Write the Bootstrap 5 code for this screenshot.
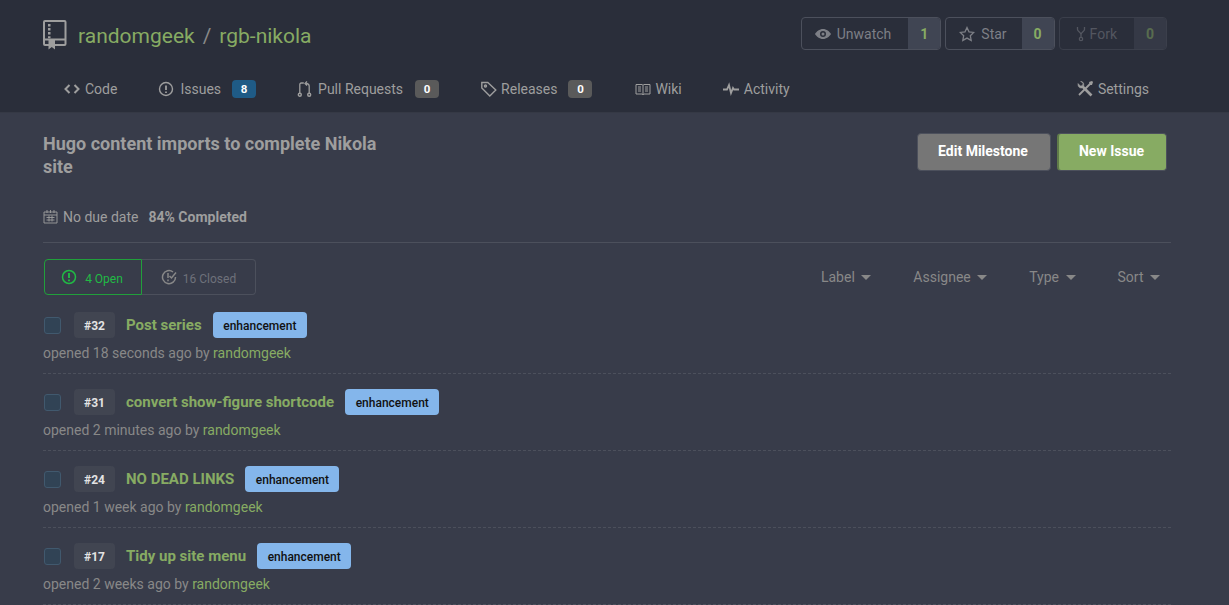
<!DOCTYPE html>
<html lang="en"><head><meta charset="utf-8"><title>Milestone</title>
<link href="https://cdn.jsdelivr.net/npm/bootstrap@5.3.0/dist/css/bootstrap.min.css" rel="stylesheet">
<style>
html,body{height:605px;overflow:hidden}
body{background:#383c4a;color:#9e9e9e;font:14px/20px Roboto,sans-serif}
a{color:inherit;text-decoration:none}
.hdr{background:#2a2e3a;height:113px;padding:0 62px 0 43px;border-bottom:1px solid #353945}
.repo-row{height:70px;padding-top:17px}
.repo-title{font-size:21px;line-height:36px;color:#87ab63;font-weight:400;padding-top:1px}
.repo-title .sep{color:#888;margin:0 8px}
.repo-ico{width:24px;height:30px;margin:3px 11px 0 0}
.act{display:flex;height:33px;border:1px solid #4c505c;border-radius:4px;overflow:hidden;color:#7d7f86}
.act>span:first-child{display:flex;align-items:center;gap:6px;padding:0 17px 0 13px}
.act>span:last-child{background:#404553;color:#87ab63;font-weight:700;width:32px;display:flex;align-items:center;justify-content:center}
.act svg{width:16px;height:16px;fill:#7d7f86}
.act.star>span:first-child{padding-right:15px}
.act.off{opacity:.5}
.act.off>span:first-child{gap:1px;padding-right:17px}
.tabs{height:43px;padding-left:21px}
.tab{display:flex;align-items:center;gap:5px;height:38px;color:#9e9e9e}
.tab svg{width:16px;height:16px;fill:none;stroke:#9e9e9e;stroke-width:1.4}
.tab-code,.tab-issues{margin-right:41px}
.tab-issues{gap:6px}
.tab-pulls{margin-right:42px}
.tab-rel{margin-right:43px;gap:4px}
.tab-wiki{margin-right:41px;gap:4px}
.tab-act{gap:5px}
.tab-set{margin-right:18px}
.tab .cnt{font-size:11.5px;font-weight:700;color:#fff;background:#5a5a5a;border-radius:4px;width:24px;height:18px;display:flex;align-items:center;justify-content:center;margin-left:7px}
.tab .cnt.blue{background:#1f5b86;margin-left:5px}
.wrap{padding:0 58px 0 43px}
.ms-title{font-size:18px;line-height:23px;font-weight:700;width:340px;color:#9e9e9e;padding-top:19px}
.ms-btns{margin-top:20px;margin-right:4px}
.bt{height:38px;border:1px solid #4c505c;border-radius:4px;color:#fff;font-weight:700;display:flex;align-items:center;justify-content:center;padding:0 2px 2px 0}
.bt.grey{width:134px;background:#767676}
.bt.green{width:110px;background:#87ab63;margin-left:6px;border-left:2px solid #5f7a49}
.meta{margin-top:29px;border-bottom:1px solid #4c505c;height:36px}
.meta b{font-weight:700;margin-left:10px}
.cal{width:15px;height:15px;margin-right:5px;fill:none;stroke:#9e9e9e;stroke-width:.9;vertical-align:-2px}
.filter{margin-top:16px;height:38px}
.seg{display:flex;font-size:12px;margin-left:1px}
.seg>div{height:36px;display:flex;align-items:center}
.seg .open{width:98px;border:1px solid #21a03b;border-radius:4px 0 0 4px;color:#21ba45;justify-content:center;gap:8px;padding-right:2px}
.seg .closed{width:114px;border:1px solid #4c505c;border-left:0;border-radius:0 4px 4px 0;color:#6e717a;justify-content:center;gap:6px}
.seg span{padding-top:3px}
.seg svg{width:16px;height:16px;fill:none;stroke:currentColor;stroke-width:1.5}
.seg .closed svg{stroke:#888}
.menu-it{display:flex;align-items:center;gap:6.5px;color:#888;height:36px}
.menu-it i{width:0;height:0;border:5px solid transparent;border-top-color:#888;border-bottom:0}
.menus{gap:42px;padding-right:11px;font-size:14px}
.it{height:77px;border-bottom:1px dashed #4c505c;padding-top:15px}
.cb{width:17px;height:17px;background:#314355;border:1px solid #41596e;border-radius:3px;margin:0 13px 0 1px}
.num{width:41px;height:26px;background:#414551;border-radius:4px;color:#e3e3e3;font-size:12px;font-weight:700;display:flex;align-items:center;justify-content:center;margin-right:11px;padding-top:1px}
.ttl{font-weight:700;font-size:15px;color:#87ab63;margin-right:11.2px}
.lbl{background:#84b6eb;color:#111;font-size:12px;font-weight:500;height:26px;padding:1px 10.4px 0;border-radius:4px;display:flex;align-items:center}
.sub{margin-top:5px;color:#888}
.sub a{color:#87ab63}
</style></head><body>
<header class="hdr">
<div class="repo-row d-flex justify-content-between align-items-start">
<div class="d-flex align-items-start">
<svg class="repo-ico" viewBox="0 0 24 30"><g fill="none" stroke="#9e9e9e" stroke-width="2"><rect x="1" y="1" width="21.500" height="24" rx="1"/><path d="M1 19.500h21.500"/></g><path fill="#9e9e9e" d="M5 4h2.500v2.500H5zM5 8h2.500v2.500H5zM5 12h2.500v2.500H5zM5 16.200h2.500v2H5zM5.500 20h6.500v9.500l-3.250-2.500-3.250 2.500z"/></svg>
<div class="repo-title"><a href="#">randomgeek</a><span class="sep">/</span><a href="#">rgb-nikola</a></div>
</div>
<div class="d-flex gap-1">
<div class="act"><span><svg viewBox="0 0 16 16"><path fill-rule="evenodd" d="M8 3C4.500 3 1.500 5.500 0 8c1.500 2.500 4.500 5 8 5s6.500-2.500 8-5c-1.500-2.500-4.500-5-8-5zm0 8a3 3 0 1 1 0-6 3 3 0 0 1 0 6zm0-1.500a1.500 1.500 0 1 0 0-3 1.500 1.500 0 0 0 0 3z"/></svg>Unwatch</span><span>1</span></div>
<div class="act star"><span><svg viewBox="0 0 16 16"><path fill="none" stroke="#7d7f86" stroke-width="1.300" d="M8 1.500l2 4.300 4.700.6-3.400 3.300.9 4.700L8 12.100l-4.200 2.300.9-4.700L1.300 6.400 6 5.800z"/></svg>Star</span><span>0</span></div>
<div class="act off"><span><svg viewBox="0 0 16 16"><path fill="none" stroke="#7d7f86" stroke-width="1.300" d="M4.500 1v2.500c0 2 3.500 2.500 3.500 5 0-2.500 3.500-3 3.500-5V1M8 8.500V11"/><circle cx="8" cy="13" r="1.700" fill="none" stroke="#7d7f86" stroke-width="1.200"/></svg>Fork</span><span>0</span></div>
</div>
</div>
<nav class="tabs d-flex justify-content-between">
<div class="d-flex">
<a class="tab tab-code" href="#"><svg viewBox="0 0 16 16"><path d="M5.500 4L1.500 8l4 4M10.500 4l4 4-4 4" stroke-width="2"/></svg>Code</a>
<a class="tab tab-issues" href="#"><svg viewBox="0 0 16 16"><circle cx="8" cy="8" r="6.500"/><path d="M8 4.500v4.500M8 10.500v1.500" stroke-width="1.800"/></svg>Issues<span class="cnt blue">8</span></a>
<a class="tab tab-pulls" href="#"><svg viewBox="0 0 16 16"><circle cx="2.800" cy="13.800" r="1.500"/><circle cx="12.200" cy="13.800" r="1.500"/><path d="M2.800 12.300V3.500c0-1 .5-1.500 1.500-1.500h2.500M12.200 12.300V5c0-1.500-1-2.500-3-2.500M10 .5L8 2.500l2 2" stroke-width="1.300"/></svg>Pull Requests<span class="cnt">0</span></a>
<a class="tab tab-rel" href="#"><svg viewBox="0 0 16 16"><path d="M.8 1.500v5.500l8 8 6-6-8-7.500z"/><circle cx="4.500" cy="5" r="1"/></svg>Releases<span class="cnt">0</span></a>
<a class="tab tab-wiki" href="#"><svg viewBox="0 0 16 16"><path d="M1 3.500h6l1 .8 1-.8h6v9.500H9l-1 .7-1-.7H1zM8 4.300v9.400M3 6h3M3 8h3M3 10h3M10 6h3M10 8h3M10 10h3" stroke-width="1"/></svg>Wiki</a>
<a class="tab tab-act" href="#"><svg viewBox="0 0 16 16"><path d="M0 8.500h4l2-4.500 2 8 2-5 1 1.500h5" stroke-width="1.800"/></svg>Activity</a>
</div>
<a class="tab tab-set" href="#"><svg viewBox="0 0 16 16"><path d="M5.500 5.500L14.500 14.500" stroke-width="2.600"/><path d="M14.500 1.500L2 14" stroke-width="1.800"/><path d="M1 2.500l2.500 2.500 2-.5.5-2L3.500 0C6 .5 7.500 2.500 6.500 5.500L5 7C2.500 7.500 .5 5.500 1 2.500z" fill="#9e9e9e" stroke-width=".5"/><path d="M12 1l3-1 1 1-1 3h-2z" fill="#9e9e9e" stroke="none"/></svg>Settings</a>
</nav>
</header>
<main class="wrap">
<div class="d-flex justify-content-between align-items-start">
<h1 class="ms-title m-0">Hugo content imports to complete Nikola site</h1>
<div class="d-flex ms-btns"><a class="bt grey" href="#">Edit Milestone</a><a class="bt green" href="#">New Issue</a></div>
</div>
<div class="meta"><svg class="cal" viewBox="0 0 15 15"><path d="M1 3h13v11H1zM1 6h13M4 1v3M7.500 1v3M11 1v3M3.500 8.500h8M3.500 11h8M6 6.500v6M9 6.500v6"/></svg>No due date<b>84% Completed</b></div>
<div class="filter d-flex justify-content-between align-items-start">
<div class="seg">
<div class="open"><svg viewBox="0 0 16 16"><circle cx="8" cy="8" r="6.500"/><path d="M8 4v5M8 10.500v1.700" stroke-width="1.900"/></svg><span>4 Open</span></div>
<div class="closed"><svg viewBox="0 0 16 16"><path d="M14.500 8A6.500 6.500 0 1 1 12 3M7 4v5M7 10.500v1.700M8.500 7l2 2 4.500-5.500"/></svg><span>16 Closed</span></div>
</div>
<div class="d-flex menus">
<span class="menu-it">Label<i></i></span><span class="menu-it">Assignee<i></i></span><span class="menu-it">Type<i></i></span><span class="menu-it">Sort<i></i></span>
</div>
</div>
<div class="it"><div class="d-flex align-items-center"><span class="cb"></span><span class="num">#32</span><a class="ttl" href="#">Post series</a><span class="lbl">enhancement</span></div><div class="sub">opened 18 seconds ago by <a href="#">randomgeek</a></div></div>
<div class="it"><div class="d-flex align-items-center"><span class="cb"></span><span class="num">#31</span><a class="ttl" href="#">convert show-figure shortcode</a><span class="lbl">enhancement</span></div><div class="sub">opened 2 minutes ago by <a href="#">randomgeek</a></div></div>
<div class="it"><div class="d-flex align-items-center"><span class="cb"></span><span class="num">#24</span><a class="ttl" href="#">NO DEAD LINKS</a><span class="lbl">enhancement</span></div><div class="sub">opened 1 week ago by <a href="#">randomgeek</a></div></div>
<div class="it"><div class="d-flex align-items-center"><span class="cb"></span><span class="num">#17</span><a class="ttl" href="#">Tidy up site menu</a><span class="lbl">enhancement</span></div><div class="sub">opened 2 weeks ago by <a href="#">randomgeek</a></div></div>
</main>
</body></html>
